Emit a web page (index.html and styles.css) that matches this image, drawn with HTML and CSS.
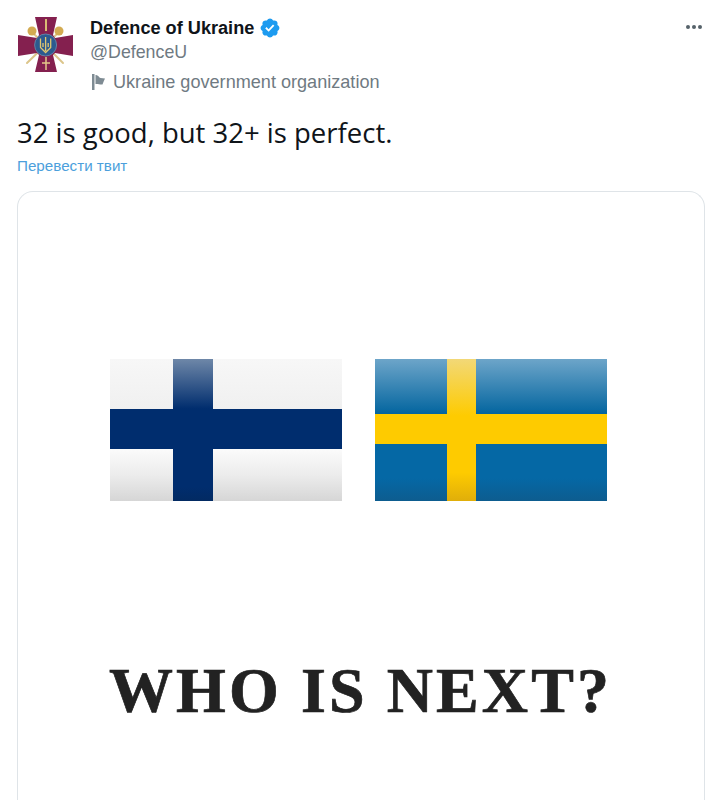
FILE: index.html
```html
<!DOCTYPE html>
<html lang="ru">
<head>
    <meta charset="UTF-8">
    <meta name="viewport" content="width=device-width, initial-scale=1.0">
    <title>Defence of Ukraine</title>
    <link rel="stylesheet" href="styles.css">
</head>
<body>
    <div class="tweet">
        <div class="tweet-head">
            <svg class="avatar" viewBox="0 0 56 57">
                <!-- maces behind the cross -->
                <g stroke="#dcc58a" stroke-width="2" stroke-linecap="round">
                    <line x1="14" y1="16" x2="45" y2="47"/>
                    <line x1="41" y1="16" x2="9" y2="47"/>
                </g>
                <circle cx="14" cy="15" r="4.500" fill="#d3ab52"/>
                <circle cx="41" cy="15" r="4.500" fill="#d3ab52"/>
                <path fill="#84204f" d="M17 1H39L35 19L37 22L55 19V40L37 37L35 39L39 56H17L21 39L19 37L0 40V19L19 22L21 19Z"/>
                <line x1="28" y1="3" x2="28" y2="15" stroke="#d9bb74" stroke-width="2"/>
                <path fill="none" stroke="#e3c889" stroke-width="1.500" d="M28 41V54M24 47H32"/>
                <circle cx="27.600" cy="29" r="11" fill="#2b5a8f" stroke="#6d8fae" stroke-width="0.800"/>
                <!-- trident on the shield -->
                <path fill="none" stroke="#e0c770" stroke-width="1.300" d="M22.500 22.500V31.500L27.600 36.500L32.700 31.500V22.500M25 31V27M30.200 31V27M27.600 21V35"/>
            </svg>
            <div class="who">
                <div class="name-row">
                    <span class="name">Defence of Ukraine</span>
                    <svg class="badge" viewBox="0 0 24 24"><path fill="#1d9bf0" d="M22.250 12c0-1.430-.880-2.670-2.190-3.340.460-1.390.200-2.900-.810-3.910s-2.520-1.270-3.910-.810c-.660-1.310-1.910-2.190-3.340-2.190s-2.670.880-3.330 2.190c-1.400-.460-2.910-.200-3.920.810s-1.260 2.520-.800 3.910c-1.310.670-2.200 1.910-2.200 3.340s.890 2.670 2.200 3.340c-.460 1.390-.210 2.900.800 3.910s2.520 1.260 3.910.810c.670 1.310 1.910 2.190 3.340 2.190s2.680-.880 3.340-2.190c1.390.450 2.900.200 3.910-.810s1.270-2.520.81-3.910c1.310-.670 2.190-1.910 2.190-3.340zm-11.710 4.200L6.800 12.460l1.410-1.420 2.260 2.260 4.800-5.230 1.470 1.360-6.200 6.770z"/></svg>
                </div>
                <div class="handle">@DefenceU</div>
                <div class="label">
                    <svg class="label-icon" viewBox="0 0 16 20"><path fill="#7e8b93" d="M2 2H4.500V18H2ZM5.500 3C8 2.500 9 5.500 10.500 6L15 6.500C14 8.500 13.500 10 12.500 12.500C10 13 8 11.500 5.500 12Z"/></svg>
                    <span>Ukraine government organization</span>
                </div>
            </div>
            <div class="more"><i></i><i></i><i></i></div>
        </div>

        <p class="tweet-text">32 is good, but 32+ is perfect.</p>
        <a class="translate">Перевести твит</a>

        <div class="media">
            <div class="flags">
                <svg class="flag" viewBox="0 0 232 142">
                    <defs>
                        <linearGradient id="fiTop" x1="0" y1="0" x2="0" y2="1">
                            <stop offset="0" stop-color="#f7f7f7"/>
                            <stop offset="1" stop-color="#f0f0f0"/>
                        </linearGradient>
                        <linearGradient id="fiBottom" x1="0" y1="0" x2="0" y2="1">
                            <stop offset="0" stop-color="#fbfbfb"/>
                            <stop offset="0.500" stop-color="#ececec"/>
                            <stop offset="1" stop-color="#d6d6d6"/>
                        </linearGradient>
                        <linearGradient id="fiCross" x1="0" y1="0" x2="0" y2="1">
                            <stop offset="0" stop-color="#6e87a8"/>
                            <stop offset="0.350" stop-color="#002d6e"/>
                            <stop offset="0.900" stop-color="#002d6e"/>
                            <stop offset="1" stop-color="#022a62"/>
                        </linearGradient>
                        <linearGradient id="seTop" x1="0" y1="0" x2="0" y2="1">
                            <stop offset="0" stop-color="#6da5c9"/>
                            <stop offset="1" stop-color="#03659f"/>
                        </linearGradient>
                        <linearGradient id="seBottom" x1="0" y1="0" x2="0" y2="1">
                            <stop offset="0" stop-color="#0568a5"/>
                            <stop offset="0.600" stop-color="#0568a5"/>
                            <stop offset="1" stop-color="#0d5c8f"/>
                        </linearGradient>
                        <linearGradient id="seCross" x1="0" y1="0" x2="0" y2="1">
                            <stop offset="0" stop-color="#f2d877"/>
                            <stop offset="0.400" stop-color="#fecb00"/>
                            <stop offset="0.800" stop-color="#fecb00"/>
                            <stop offset="1" stop-color="#e0ae0a"/>
                        </linearGradient>
                    </defs>
                    <rect width="232" height="50" fill="url(#fiTop)"/>
                    <rect y="90" width="232" height="52" fill="url(#fiBottom)"/>
                    <rect y="50" width="232" height="40" fill="#002d6e"/>
                    <rect x="63" width="40" height="142" fill="url(#fiCross)"/>
                </svg>
                <svg class="flag" viewBox="0 0 232 142">
                    <rect width="232" height="55" fill="url(#seTop)"/>
                    <rect y="85" width="232" height="57" fill="url(#seBottom)"/>
                    <rect y="55" width="232" height="30" fill="#fecb00"/>
                    <rect x="72" width="29" height="142" fill="url(#seCross)"/>
                </svg>
            </div>
            <h1 class="who-next">WHO IS NEXT?</h1>
        </div>
    </div>
</body>
</html>
```

FILE: styles.css
```css
html, body {
    height: 100%;
}
body {
    margin: 0;
    overflow: hidden;
    background-color: #ffffff;
    font-family: 'Open Sans', sans-serif;
    color: #0f1419;
}
.tweet {
    padding: 16px 15px 0 17px;
}
.tweet-head {
    display: flex;
    align-items: flex-start;
}
.avatar {
    width: 56px;
    height: 57px;
    margin-left: 1px;
    flex-shrink: 0;
}
.who {
    margin-left: 16px;
    flex: 1;
}
.name-row {
    display: flex;
    align-items: center;
    gap: 5px;
    height: 24px;
}
.name {
    font-family: 'Liberation Sans', sans-serif;
    font-size: 18.150px;
    font-weight: bold;
}
.badge {
    width: 22px;
    height: 22px;
}
.handle {
    font-family: 'Liberation Sans', sans-serif;
    font-size: 17.800px;
    color: #6f7a82;
    margin-top: 1px;
    line-height: 22px;
}
.label {
    display: flex;
    align-items: center;
    gap: 7px;
    margin-top: 7px;
    font-family: 'Liberation Sans', sans-serif;
    font-size: 18.100px;
    line-height: 24px;
    color: #6f7a82;
}
.label-icon {
    width: 16px;
    height: 20px;
}
.more {
    display: flex;
    gap: 2px;
    margin-top: 9px;
    margin-right: 3px;
}
.more i {
    width: 4px;
    height: 4px;
    border-radius: 50%;
    background-color: #56626a;
}
.tweet-text {
    margin: 21px 0 0;
    font-size: 27.500px;
    line-height: 36px;
}
.translate {
    display: block;
    margin-top: 5px;
    font-family: 'Liberation Sans', sans-serif;
    font-size: 15.200px;
    line-height: 20px;
    color: #4c9fdc;
}
.media {
    margin-top: 15px;
    height: 609px;
    box-sizing: border-box;
    border: 1px solid #dfe4e8;
    border-bottom: 0;
    border-radius: 16px 16px 0 0;
    padding: 167px 0 0 92px;
}
.flags {
    display: flex;
    gap: 33px;
}
.flag {
    width: 232px;
    height: 142px;
}
.who-next {
    margin: 152px 0 0 -1px;
    font-family: 'Liberation Serif', serif;
    font-size: 64px;
    line-height: 76px;
    font-weight: bold;
    letter-spacing: 3.100px;
    -webkit-text-stroke: 0.700px #222222;
    white-space: nowrap;
    color: #222222;
}
```
